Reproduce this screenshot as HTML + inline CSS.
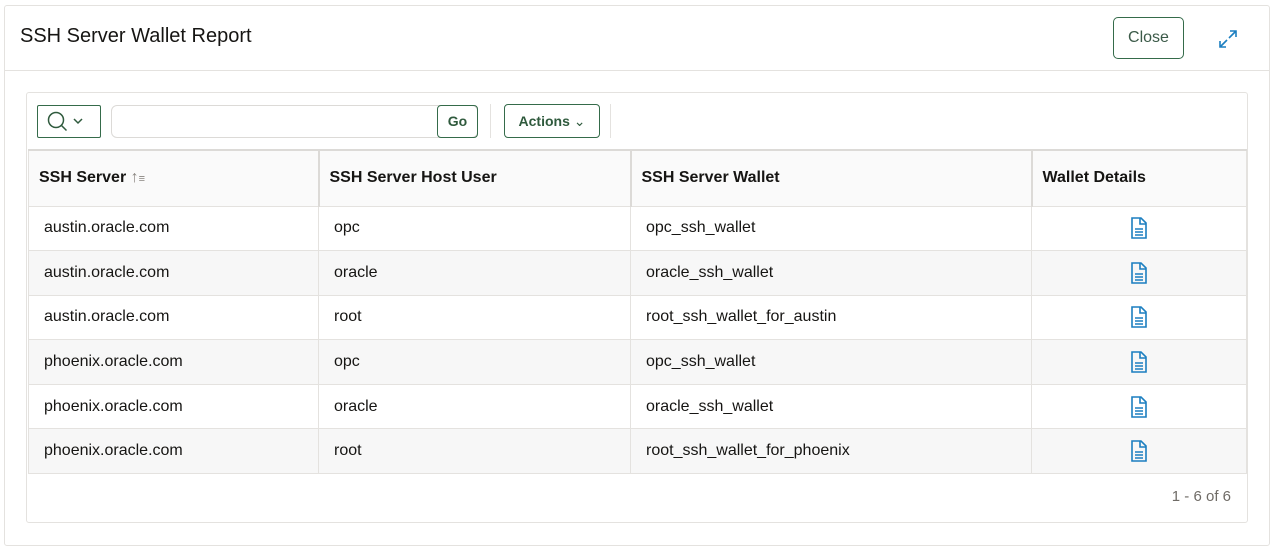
<!DOCTYPE html>
<html><head><style>
*{box-sizing:border-box;margin:0;padding:0}
body{width:1276px;height:551px;background:#fff;font-family:"Liberation Sans",sans-serif;color:#161513;position:relative;overflow:hidden}
.dlg{position:absolute;left:4px;top:5px;width:1266px;height:541px;border:1px solid #e4e2df;border-radius:3px}
.title{position:absolute;left:20px;top:25px;font-size:20px;color:#161513}
.hdiv{position:absolute;left:5px;top:70px;width:1264px;height:1px;background:#e4e2df}
.close{position:absolute;left:1113px;top:17px;width:71px;height:42px;border:1px solid #356b4a;border-radius:5px;font-size:16px;color:#3b5a48;text-align:center;line-height:40px}
.region{position:absolute;left:26px;top:92px;width:1222px;height:431px;border:1px solid #e4e2df;border-radius:3px}
.btn{position:absolute;border:1px solid #356b4a;border-radius:4px;font-weight:bold;font-size:14px;color:#2f5a3d;text-align:center}
table{position:absolute;left:28px;top:149px;border-collapse:collapse;width:1219px}
td,th{border:1px solid #e4e2df;text-align:left;padding-left:15px;font-size:16px}
th{height:56px;background:#fafafa;font-weight:bold;padding-left:10px;border-top:2px solid #dcdad7}
td{height:44.6px}
tr.alt td{background:#f7f7f7}
th+th{border-left:2px solid #dcdad7}
.ico{text-align:center;padding-left:0}
.foot{position:absolute;right:45px;top:488px;font-size:15px;color:#6f6b66}
</style></head><body>
<div class="dlg"></div>
<div class="title">SSH Server Wallet Report</div>
<div class="hdiv"></div>
<div class="close">Close</div>
<svg style="position:absolute;left:1217px;top:28px" width="22" height="22" viewBox="0 0 22 22" fill="none" stroke="#1c7fc0" stroke-width="1.6"><path d="M12 10L19 3M13 3h6v6M10 12L3 19M3 13v6h6"/></svg>
<div class="region"></div>
<div class="btn" style="left:37px;top:105px;width:64px;height:33px;border-radius:2px;text-align:left"><svg width="62" height="31" viewBox="0 0 62 31" fill="none" stroke="#2f5a3d" stroke-width="1.5"><circle cx="18" cy="14" r="7.5"/><path d="M23.5 19.5l5 5"/><path d="M36 13l4 4 4-4"/></svg></div>
<div style="position:absolute;left:111px;top:105px;width:367px;height:33px;border:1px solid #dcdad7;border-radius:6px"></div>
<div class="btn" style="left:437px;top:105px;width:41px;height:33px;line-height:31px">Go</div>
<div style="position:absolute;left:490px;top:104px;width:1px;height:34px;background:#e4e2df"></div>
<div class="btn" style="left:504px;top:104px;width:96px;height:34px;line-height:32px">Actions <span style="font-weight:normal">&#8964;</span></div>
<div style="position:absolute;left:610px;top:104px;width:1px;height:34px;background:#e4e2df"></div>
<table>
<tr><th style="width:290px">SSH Server <span style="color:#8a8580;font-weight:normal">&#8593;<span style="font-size:11px">&#8801;</span></span></th><th style="width:312px">SSH Server Host User</th><th style="width:401px">SSH Server Wallet</th><th>Wallet Details</th></tr>
<tr><td>austin.oracle.com</td><td>opc</td><td>opc_ssh_wallet</td><td class="ico">ICON</td></tr>
<tr class="alt"><td>austin.oracle.com</td><td>oracle</td><td>oracle_ssh_wallet</td><td class="ico">ICON</td></tr>
<tr><td>austin.oracle.com</td><td>root</td><td>root_ssh_wallet_for_austin</td><td class="ico">ICON</td></tr>
<tr class="alt"><td>phoenix.oracle.com</td><td>opc</td><td>opc_ssh_wallet</td><td class="ico">ICON</td></tr>
<tr><td>phoenix.oracle.com</td><td>oracle</td><td>oracle_ssh_wallet</td><td class="ico">ICON</td></tr>
<tr class="alt"><td>phoenix.oracle.com</td><td>root</td><td>root_ssh_wallet_for_phoenix</td><td class="ico">ICON</td></tr>
</table>
<div class="foot">1 - 6 of 6</div>
<script>
var s='<svg width="18" height="22" viewBox="0 0 18 22" fill="none" stroke="#1c7fc0" stroke-width="1.6" style="vertical-align:middle"><path d="M2 1h9l5 5v15H2z"/><path d="M10 1v6h6M5 12h8M5 15h8M5 18h8"/></svg>';
document.querySelectorAll('.ico').forEach(function(e){e.innerHTML=s});
</script>
</body></html>
